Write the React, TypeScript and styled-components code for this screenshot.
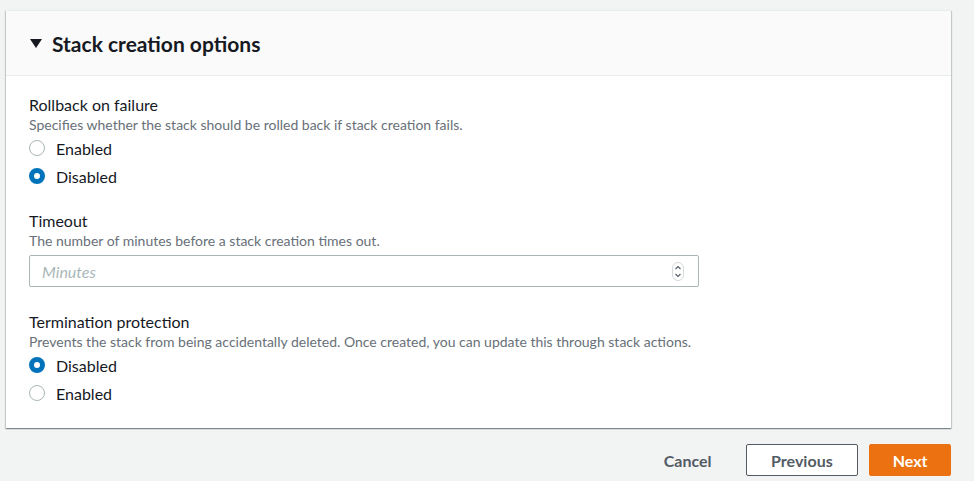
import React from "react";
import styled, { createGlobalStyle } from "styled-components";

const Global = createGlobalStyle`
  html, body { margin: 0; padding: 0; background: #f2f3f3; }
  body { font-family: Lato, "Open Sans", Arial, sans-serif; color: #16191f; }
  * { box-sizing: border-box; }
`;

const Page = styled.div`
  width: 974px;
  height: 481px;
  padding: 10px 23px 0 6px;
  display: flex;
  flex-direction: column;
`;

const Card = styled.section`
  background: #ffffff;
  border-top: 1px solid #eaeded;
  box-shadow: 0 1px 1px 0 rgba(0, 28, 36, 0.3), 1px 1px 1px 0 rgba(0, 28, 36, 0.15),
    -1px 1px 1px 0 rgba(0, 28, 36, 0.15);
`;

const Header = styled.header`
  height: 65px;
  background: #fafafa;
  border-bottom: 1px solid #eaeded;
  display: flex;
  align-items: center;
  gap: 10px;
  padding-left: 24px;
`;

const Title = styled.h2`
  margin: 0;
  font-size: 21px;
  font-weight: 700;
  color: #16191f;
`;

const Body = styled.div`
  padding: 19px 23px 21px 23px;
  display: flex;
  flex-direction: column;
`;

const Field = styled.div<{ $gap?: number }>`
  display: flex;
  flex-direction: column;
  margin-top: ${(p) => p.$gap ?? 0}px;
`;

const Label = styled.div`
  font-size: 16px;
  line-height: 20px;
  color: #16191f;
`;

const Desc = styled.div`
  font-size: 14px;
  line-height: 20px;
  color: #687078;
`;

const RadioGroup = styled.div`
  display: flex;
  flex-direction: column;
  margin-top: -1px;
`;

const RadioRow = styled.label`
  height: 28px;
  display: flex;
  align-items: center;
  gap: 11px;
  font-size: 16px;
  color: #16191f;
`;

const RadioDot = styled.span<{ $checked?: boolean }>`
  width: 16px;
  height: 16px;
  border-radius: 50%;
  flex: none;
  background: #ffffff;
  border: ${(p) => (p.$checked ? "5px solid #0073bb" : "1.5px solid #aab7b8")};
`;

const InputBox = styled.div`
  margin-top: 4px;
  width: 670px;
  height: 32px;
  border: 1px solid #aab7b8;
  border-radius: 2px;
  display: flex;
  align-items: center;
  justify-content: space-between;
  padding: 0 14px 0 12px;
`;

const Placeholder = styled.span`
  font-size: 16px;
  font-style: italic;
  color: #aab7b8;
`;

const Footer = styled.div`
  display: flex;
  justify-content: flex-end;
  align-items: center;
  gap: 11px;
  margin-top: 16px;
`;

const Button = styled.button<{ $variant: "link" | "normal" | "primary" }>`
  height: 32px;
  font-family: inherit;
  font-size: 16px;
  font-weight: 700;
  border-radius: 2px;
  padding: 0 ${(p) => (p.$variant === "primary" ? 22.5 : p.$variant === "normal" ? 24.5 : 22)}px;
  cursor: pointer;
  color: ${(p) => (p.$variant === "primary" ? "#ffffff" : "#545b64")};
  background: ${(p) => (p.$variant === "primary" ? "#ec7211" : p.$variant === "normal" ? "#ffffff" : "transparent")};
  border: 1px solid
    ${(p) => (p.$variant === "primary" ? "#ec7211" : p.$variant === "normal" ? "#545b64" : "transparent")};
`;

const Caret = () => (
  <svg width="12" height="10" viewBox="0 0 12 10">
    <polygon points="0,1 12,1 6,10" fill="#16191f" />
  </svg>
);

const Spinner = () => (
  <svg width="12" height="19" viewBox="0 0 12 19">
    <rect x="0.5" y="0.5" width="11" height="18" rx="5.5" fill="#fff" stroke="#d5dbdb" />
    <polyline points="3.5,7 6,4.5 8.5,7" fill="none" stroke="#545b64" strokeWidth="1.1" />
    <polyline points="3.5,12 6,14.5 8.5,12" fill="none" stroke="#545b64" strokeWidth="1.1" />
  </svg>
);

const Radio = ({ label, checked }: { label: string; checked?: boolean }) => (
  <RadioRow>
    <RadioDot $checked={checked} />
    {label}
  </RadioRow>
);

export default function App() {
  return (
    <>
      <Global />
      <Page>
        <Card>
          <Header>
            <Caret />
            <Title>Stack creation options</Title>
          </Header>
          <Body>
            <Field>
              <Label>Rollback on failure</Label>
              <Desc>Specifies whether the stack should be rolled back if stack creation fails.</Desc>
              <RadioGroup>
                <Radio label="Enabled" />
                <Radio label="Disabled" checked />
              </RadioGroup>
            </Field>
            <Field $gap={21}>
              <Label>Timeout</Label>
              <Desc>The number of minutes before a stack creation times out.</Desc>
              <InputBox>
                <Placeholder>Minutes</Placeholder>
                <Spinner />
              </InputBox>
            </Field>
            <Field $gap={25}>
              <Label>Termination protection</Label>
              <Desc>
                Prevents the stack from being accidentally deleted. Once created, you can update this through stack
                actions.
              </Desc>
              <RadioGroup>
                <Radio label="Disabled" checked />
                <Radio label="Enabled" />
              </RadioGroup>
            </Field>
          </Body>
        </Card>
        <Footer>
          <Button $variant="link">Cancel</Button>
          <Button $variant="normal">Previous</Button>
          <Button $variant="primary">Next</Button>
        </Footer>
      </Page>
    </>
  );
}
